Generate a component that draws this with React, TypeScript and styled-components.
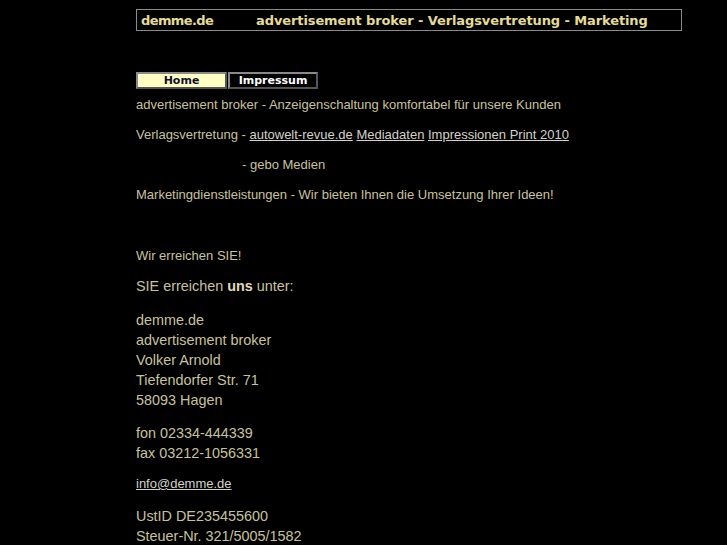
import React from 'react'
import styled, { createGlobalStyle } from 'styled-components'

const GlobalStyle = createGlobalStyle`
  html, body {
    margin: 0;
    padding: 0;
    background: #000;
  }
  body {
    font-family: 'Liberation Sans', Arial, sans-serif;
    color: #c8c29c;
  }
`

const Page = styled.div`
  width: 546px;
  margin-left: 136px;
  padding-top: 9px;
`

const Header = styled.div`
  display: flex;
  align-items: center;
  height: 20px;
  border: 1px solid #8a8a8a;
  padding: 0 4px;
  font-family: 'DejaVu Sans', sans-serif;
  font-weight: bold;
  font-size: 13px;
  letter-spacing: -0.1px;
  color: #e4dc96;
  white-space: nowrap;
`

const Brand = styled.span`
  width: 115px;
  letter-spacing: -0.6px;
`

const Nav = styled.div`
  display: flex;
  margin-top: 41px;
  margin-bottom: 8px;
`

const Tab = styled.a<{ $active?: boolean }>`
  box-sizing: border-box;
  width: ${(p) => (p.$active ? 91 : 90)}px;
  height: 17px;
  margin-right: 1px;
  border: 2px solid #8a8a8a;
  border-right-color: #555;
  border-bottom-color: #555;
  background: ${(p) => (p.$active ? '#ffffc4' : '#000')};
  color: ${(p) => (p.$active ? '#101030' : '#fff')};
  font-family: 'DejaVu Sans', sans-serif;
  font-weight: bold;
  font-size: 11px;
  line-height: 13px;
  text-align: center;
  text-decoration: none;
`

const Line = styled.p<{ $indent?: number; $gap?: number }>`
  margin: ${(p) => p.$gap ?? 15}px 0 0 ${(p) => p.$indent ?? 0}px;
  font-size: 13px;
  line-height: 15px;
`

const Big = styled.div<{ $gap?: number }>`
  margin-top: ${(p) => p.$gap ?? 13}px;
  font-size: 14.4px;
  line-height: 20px;
`

const Link = styled.a`
  color: #d2d2c8;
  text-decoration: underline;
`

const Strong = styled.b`
  color: #e0dab8;
`

export default function App() {
  return (
    <>
      <GlobalStyle />
      <Page>
        <Header>
          <Brand>demme.de</Brand>
          <span>advertisement broker - Verlagsvertretung - Marketing</span>
        </Header>
        <Nav>
          <Tab $active>Home</Tab>
          <Tab>Impressum</Tab>
        </Nav>
        <Line $gap={0}>
          advertisement broker - Anzeigenschaltung komfortabel für unsere Kunden
        </Line>
        <Line>
          Verlagsvertretung - <Link>autowelt-revue.de</Link>{' '}
          <Link>Mediadaten</Link> <Link>Impressionen Print 2010</Link>
        </Line>
        <Line $indent={106}>- gebo Medien</Line>
        <Line>
          Marketingdienstleistungen - Wir bieten Ihnen die Umsetzung Ihrer Ideen!
        </Line>
        <Line $gap={46}>Wir erreichen SIE!</Line>
        <Big $gap={13}>
          SIE erreichen <Strong>uns</Strong> unter:
        </Big>
        <Big $gap={14}>
          demme.de
          <br />
          advertisement broker
          <br />
          Volker Arnold
          <br />
          Tiefendorfer Str. 71
          <br />
          58093 Hagen
        </Big>
        <Big>
          fon 02334-444339
          <br />
          fax 03212-1056331
        </Big>
        <Line $gap={13}>
          <Link>info@demme.de</Link>
        </Line>
        <Big $gap={15}>
          UstID DE235455600
          <br />
          Steuer-Nr. 321/5005/1582
        </Big>
      </Page>
    </>
  )
}
